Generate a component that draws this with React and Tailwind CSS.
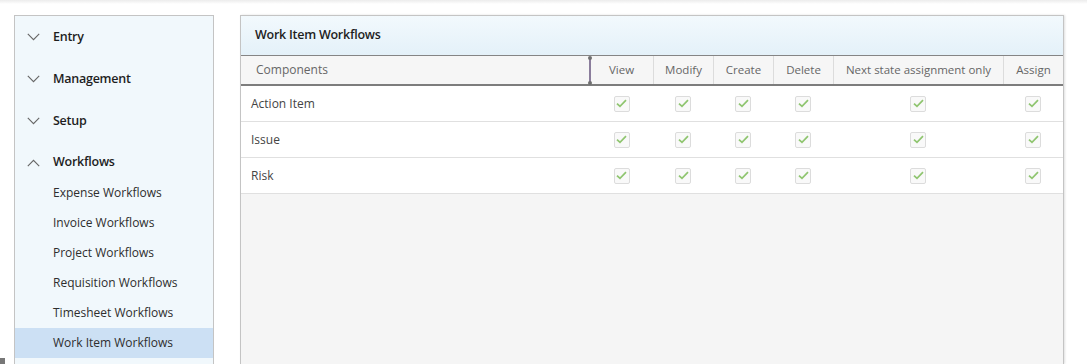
import React from "react";

const font = { fontFamily: '"Open Sans", "Noto Sans", sans-serif' };

function Chevron({ up }) {
  return (
    <svg width="13" height="8" viewBox="0 0 13 8" className="shrink-0">
      {up ? (
        <path d="M0.8 7.2 L6.5 1.3 L12.2 7.2" fill="none" stroke="#666" strokeWidth="1.1" />
      ) : (
        <path d="M0.8 0.8 L6.5 6.7 L12.2 0.8" fill="none" stroke="#666" strokeWidth="1.1" />
      )}
    </svg>
  );
}

function Check() {
  return (
    <div className="w-[16px] h-[16px] border border-[#dcdcdc] rounded-[2px] bg-[#f9f9f9] flex items-center justify-center">
      <svg width="11" height="9" viewBox="0 0 11 9">
        <path d="M1 4.6 L4 7.4 L10 1.2" fill="none" stroke="#8fc56f" strokeWidth="1.7" />
      </svg>
    </div>
  );
}

const cols = ["View", "Modify", "Create", "Delete", "Next state assignment only", "Assign"];
const rows = ["Action Item", "Issue", "Risk"];
const gridCols = "grid grid-cols-[349px_63px_60px_60px_60px_170px_60px]";

export default function App() {
  return (
    <div className="relative w-full h-[364px] bg-white overflow-hidden" style={font}>
      <div className="h-[4px] bg-gradient-to-b from-[#ececec] to-white" />
      <div className="flex pt-[11px] pl-[14px] h-[360px]">
        {/* Sidebar */}
        <div className="w-[200px] h-full border border-b-0 border-[#c4c4c4] bg-[#f1f8fc]">
          {["Entry", "Management", "Setup"].map((t) => (
            <div key={t} className="h-[42px] flex items-center pl-[12px] gap-[13px]">
              <Chevron />
              <span className="text-[12.5px] font-semibold tracking-[-0.25px] text-[#1e1e1e]">{t}</span>
            </div>
          ))}
          <div className="h-[36px] flex items-center pl-[12px] gap-[13px] pt-[5px]">
            <Chevron up />
            <span className="text-[12.5px] font-semibold tracking-[-0.25px] text-[#1e1e1e]">Workflows</span>
          </div>
          {[
            "Expense Workflows",
            "Invoice Workflows",
            "Project Workflows",
            "Requisition Workflows",
            "Timesheet Workflows",
            "Work Item Workflows",
          ].map((t, i) => (
            <div
              key={t}
              className={`h-[30px] flex items-center pl-[38px] text-[12px] text-[#2e2e2e] ${
                i === 5 ? "bg-[#cce0f4]" : ""
              }`}
            >
              {t}
            </div>
          ))}
        </div>

        {/* Main panel */}
        <div className="ml-[26px] w-[824px] h-full border border-b-0 border-[#c4c4c4] bg-[#f5f5f5] flex flex-col shadow-[1px_0_2px_rgba(0,0,0,0.12)]">
          <div className="h-[40px] shrink-0 flex items-center pl-[14px] bg-gradient-to-b from-[#f2f9fd] to-[#e4f1f9] border-b border-[#858585]">
            <span className="text-[12.5px] font-semibold tracking-[-0.25px] text-[#1e1e1e]">Work Item Workflows</span>
          </div>
          <div className={`${gridCols} h-[30px] shrink-0 bg-[#f6f6f6] border-b-2 border-[#7d7d7d]`}>
            <div className="relative flex items-center pl-[15px] text-[12px] text-[#666]">
              Components
              <div className="absolute right-[-1px] top-[1px] bottom-[0px] w-[2px] bg-[#8b7d9c]">
                <div className="absolute left-[-1px] top-[-1px] w-[4px] h-[4px] rounded-full bg-[#6f6f6f]" />
                <div className="absolute left-[-1px] bottom-[-1px] w-[4px] h-[4px] rounded-full bg-[#6f6f6f]" />
              </div>
            </div>
            {cols.map((c, i) => (
              <div
                key={c}
                className={`flex items-center justify-center text-[11.5px] text-[#666] ${
                  i === 0 ? "" : "border-l border-[#dcdcdc]"
                }`}
              >
                {c}
              </div>
            ))}
          </div>
          {rows.map((r) => (
            <div key={r} className={`${gridCols} h-[36px] shrink-0 bg-white border-b border-[#e0e0e0]`}>
              <div className="flex items-center pl-[10px] text-[12px] text-[#444]">{r}</div>
              {cols.map((c) => (
                <div key={c} className="flex items-center justify-center">
                  <Check />
                </div>
              ))}
            </div>
          ))}
          <div className="flex-1" />
        </div>
      </div>
      <div className="absolute left-0 bottom-0 w-[5px] h-[6px] bg-[#777]" />
    </div>
  );
}
